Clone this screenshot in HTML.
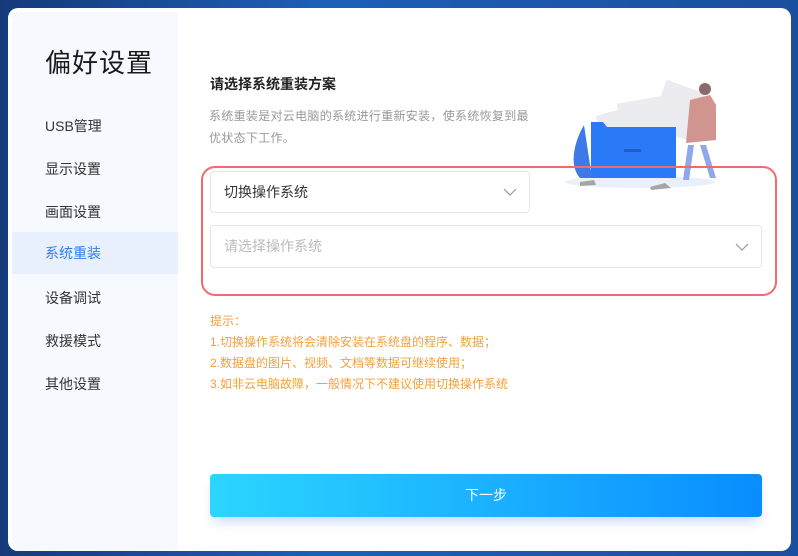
<!DOCTYPE html>
<html><head><meta charset="utf-8"><style>
*{margin:0;padding:0;box-sizing:border-box}
html,body{width:798px;height:556px;overflow:hidden}
body{background:linear-gradient(90deg,#143a7a,#1d5fb8 40%,#1a4f9e);font-family:"Liberation Sans","Noto Sans CJK SC",sans-serif;position:relative}
.win{position:absolute;left:8px;top:8px;width:783px;height:543px;background:#fff;border-radius:10px;overflow:hidden}
.side{position:absolute;left:4px;top:4px;width:166px;height:540px;background:#f6f9fe}
.title{position:absolute;left:33px;top:31px;font-size:26px;color:#1a1a1a;letter-spacing:1px}
.item{position:absolute;left:0;width:166px;height:42px;line-height:42px;padding-left:33px;font-size:14px;color:#333}
.item.act{background:#e8f0fd;color:#2f7cf6}
.h{position:absolute;left:202px;top:66px;font-size:14px;font-weight:bold;color:#222}
.desc{position:absolute;left:201px;top:97px;width:330px;font-size:12px;color:#999;line-height:22px;letter-spacing:0.3px}
.red{position:absolute;left:193px;top:158px;width:576px;height:130px;border:2px solid #f26b6b;border-radius:14px}
.sel{position:absolute;border:1px solid #e6e6e6;border-radius:4px;font-size:14px;padding-left:13px}
.sel svg{position:absolute;right:12px;top:50%;margin-top:-4px}
.tips{position:absolute;left:202px;top:303px;font-size:12px;color:#f5a03a;line-height:21px}
.btn{position:absolute;left:202px;top:466px;width:552px;height:43px;border-radius:4px;background:linear-gradient(90deg,#2bd6ff,#0a8dff);color:#fff;font-size:14px;text-align:center;line-height:43px;box-shadow:0 8px 12px -4px rgba(60,120,255,.3)}
</style></head><body>
<div class="win">
<div class="side">
<div class="title">偏好设置</div>
<div class="item" style="top:93px">USB管理</div>
<div class="item" style="top:136px">显示设置</div>
<div class="item" style="top:179px">画面设置</div>
<div class="item act" style="top:220px">系统重装</div>
<div class="item" style="top:265px">设备调试</div>
<div class="item" style="top:308px">救援模式</div>
<div class="item" style="top:351px">其他设置</div>
</div>
<div class="h">请选择系统重装方案</div>
<div class="desc">系统重装是对云电脑的系统进行重新安装，使系统恢复到最优状态下工作。</div>
<svg style="position:absolute;left:547px;top:62px" width="175" height="125" viewBox="555 70 175 125">
<ellipse cx="640" cy="182" rx="75" ry="6" fill="#eaf0fb"/>
<rect x="600" y="110" width="55" height="50" fill="#ececf0" transform="rotate(-15 620 130)"/>
<rect x="620" y="100" width="45" height="50" fill="#ececf0" transform="rotate(-10 640 120)"/>
<rect x="657" y="85" width="40" height="50" fill="#ececf0" transform="rotate(20 677 110)"/>
<path d="M584 125 C575 140 568 165 580 178 L592 178 Z" fill="#3d7ae8"/>
<path d="M591 122 h12 l4 5 h69 v51 h-85 z" fill="#2a7af7"/>
<rect x="624" y="149" width="17" height="3" fill="#1d5dc4"/>
<circle cx="705" cy="89" r="6" fill="#8a6a6a"/>
<path d="M690 100 l20 -5 l6 10 l0 35 l-30 3 z" fill="#cf958e"/>
<path d="M688 145 l6 0 l-5 35 l-6 0 z M700 145 l6 0 l10 33 l-6 0 z" fill="#8fa8ea"/>
<path d="M580 182 l14 -2 l2 5 l-16 1z M650 187 l15 -4 l6 5 l-20 2z" fill="#a5a5a5"/>
</svg>
<div class="red"></div>
<div class="sel" style="left:202px;top:163px;width:320px;height:42px;line-height:40px;color:#333">切换操作系统<svg width="14" height="8"><path d="M1 1l6 6 6-6" fill="none" stroke="#999" stroke-width="1.2"/></svg></div>
<div class="sel" style="left:202px;top:217px;width:552px;height:43px;line-height:41px;color:#bbb">请选择操作系统<svg width="14" height="8"><path d="M1 1l6 6 6-6" fill="none" stroke="#999" stroke-width="1.2"/></svg></div>
<div class="tips">提示：<br>1.切换操作系统将会清除安装在系统盘的程序、数据；<br>2.数据盘的图片、视频、文档等数据可继续使用；<br>3.如非云电脑故障，一般情况下不建议使用切换操作系统</div>
<div class="btn">下一步</div>
</div>
</body></html>
